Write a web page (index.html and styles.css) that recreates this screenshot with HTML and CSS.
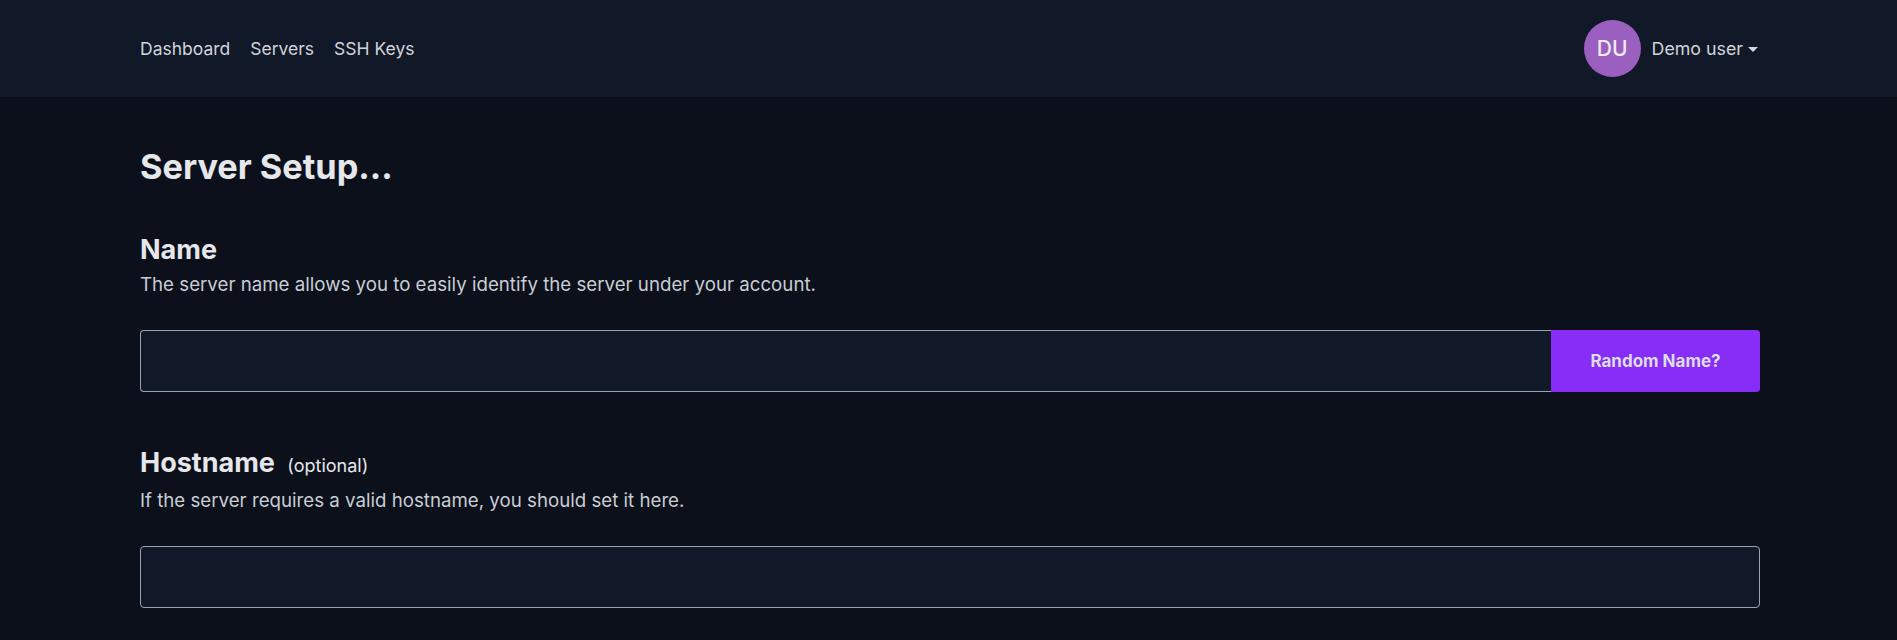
FILE: index.html
```html
<!DOCTYPE html>
<html lang="en">
<head>
<meta charset="utf-8">
<title>Server Setup</title>
<link rel="stylesheet" href="styles.css">
</head>
<body>
<header class="topbar">
  <div class="topbar-inner">
    <nav class="nav">
      <a class="nav-link" href="#">Dashboard</a>
      <a class="nav-link" href="#">Servers</a>
      <a class="nav-link" href="#">SSH Keys</a>
    </nav>
    <div class="user">
      <span class="avatar">DU</span>
      <span class="user-name">Demo user</span>
      <span class="caret"></span>
    </div>
  </div>
</header>
<main class="main">
  <h1 class="page-title">Server Setup...</h1>
  <section class="field">
    <h2 class="field-title">Name</h2>
    <p class="field-desc">The server name allows you to easily identify the server under your account.</p>
    <div class="input-group">
      <input class="input input-joined" type="text">
      <button class="btn" type="button">Random Name?</button>
    </div>
  </section>
  <section class="field">
    <h2 class="field-title">Hostname <span class="optional">(optional)</span></h2>
    <p class="field-desc">If the server requires a valid hostname, you should set it here.</p>
    <div class="input-group">
      <input class="input" type="text">
    </div>
  </section>
</main>
</body>
</html>
```
FILE: styles.css
```css
* { box-sizing: border-box; }
html, body { margin: 0; padding: 0; }
body {
  background: #0b101b;
  color: #e5e7eb;
  font-family: Inter, "Noto Sans", sans-serif;
}
.topbar {
  background: #111827;
  height: 97px;
}
.topbar-inner {
  width: 1620px;
  margin-left: 140px;
  height: 100%;
  display: flex;
  align-items: center;
  justify-content: space-between;
}
.nav { display: flex; gap: 20px; }
.nav-link {
  color: #d1d5db;
  text-decoration: none;
  font-size: 17.5px;
}
.user { display: flex; align-items: center; margin-right: 2px; }
.avatar {
  width: 57px; height: 57px;
  border-radius: 50%;
  background: #9b5fc0;
  color: #ececf0;
  font-size: 21px;
  font-weight: 500;
  display: flex; align-items: center; justify-content: center;
  margin-right: 11px;
}
.user-name { color: #d1d5db; font-size: 17.8px; }
.caret {
  width: 0; height: 0;
  border-left: 5px solid transparent;
  border-right: 5px solid transparent;
  border-top: 5px solid #d1d5db;
  margin-left: 5px;
  margin-top: 2px;
}
.main {
  width: 1620px;
  margin-left: 140px;
  padding-top: 50px;
}
.page-title {
  margin: 0 0 47px;
  font-size: 34.3px;
  line-height: 40px;
  font-weight: 700;
  color: #e5e7eb;
}
.field { margin-bottom: 55px; }
.field-title {
  margin: 0;
  font-size: 27px;
  line-height: 32px;
  font-weight: 700;
  color: #e5e7eb;
}
.optional { font-size: 18px; font-weight: 400; margin-left: 6px; }
.field-desc {
  margin: 5px 0 31px;
  font-size: 18.7px;
  line-height: 28px;
  color: #c9cdd4;
}
.input-group { display: flex; height: 62px; }
.input {
  flex: 1;
  height: 62px;
  background: #111827;
  border: 1px solid #9ca3af;
  border-radius: 4px;
  color: #e5e7eb;
  font: inherit;
  outline: none;
}
.input-joined { border-top-right-radius: 0; border-bottom-right-radius: 0; border-right: none; }
.btn {
  width: 209px;
  background: #872df5;
  border: none;
  border-radius: 0 4px 4px 0;
  color: #dcdce4;
  font-family: inherit;
  font-size: 17px;
  font-weight: 700;
}
```
